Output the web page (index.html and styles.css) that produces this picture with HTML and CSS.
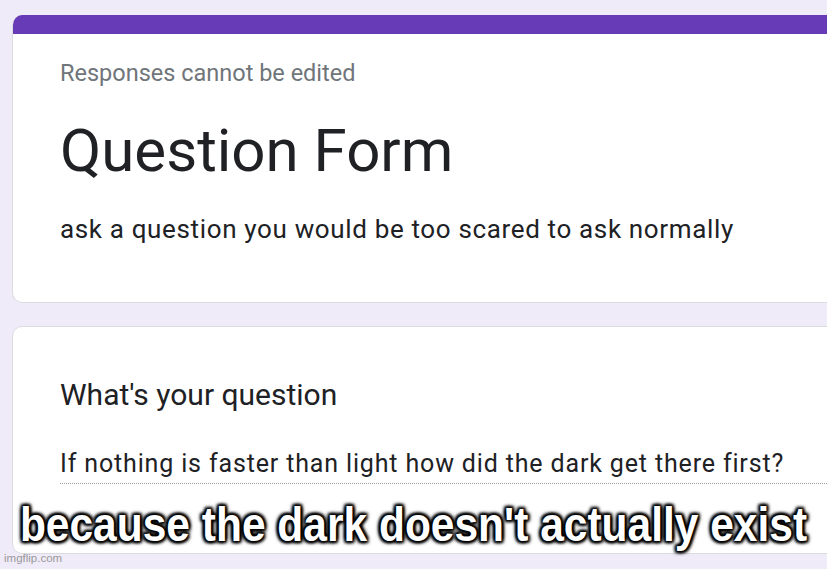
FILE: index.html
```html
<!DOCTYPE html>
<html lang="en">
<head>
    <meta charset="UTF-8">
    <meta name="viewport" content="width=device-width, initial-scale=1.0">
    <title>Question Form</title>
    <link rel="stylesheet" href="styles.css">
</head>
<body>
    <div class="page">
        <!-- header card -->
        <div class="card card-head">
            <div class="card-band"></div>
            <div class="card-body">
                <p class="note">Responses cannot be edited</p>
                <h1 class="title">Question Form</h1>
                <p class="desc">ask a question you would be too scared to ask normally</p>
            </div>
        </div>
        <!-- question card -->
        <div class="card card-question">
            <div class="card-body">
                <h2 class="question">What's your question</h2>
                <div class="answer">If nothing is faster than light how did the dark get there first?</div>
            </div>
        </div>
    </div>
    <div class="caption">because the dark doesn't actually exist</div>
    <div class="watermark">imgflip.com</div>
</body>
</html>
```

FILE: styles.css
```css
*{
    box-sizing: border-box;
}
body{
    margin: 0px;
    height: 569px;
    overflow: hidden;
    position: relative;
    background-color: #f0ebf8;
    font-family: Roboto, "Noto Sans", sans-serif;
    line-height: 1.2;
    color: #202124;
}
.page{
    padding: 15px 0 0 12px;
    display: flex;
    flex-direction: column;
    gap: 23px;
    width: 960px;
}
.card{
    background-color: #fff;
    border: 1px solid #dadce0;
    border-radius: 10px;
    overflow: hidden;
}
.card-head{
    height: 288px;
    border-top: none;
}
.card-band{
    height: 19px;
    background-color: #673ab7;
}
.card-body{
    padding: 0 0 0 47px;
}
.note{
    margin: 25px 0 0 0;
    font-size: 23.5px;
    color: #70757a;
}
.title{
    margin: 28px 0 0 0;
    font-size: 60px;
    font-weight: 400;
    line-height: 1.2;
}
.desc{
    margin: 27px 0 0 0;
    font-size: 26px;
    letter-spacing: 0.65px;
}
.card-question{
    height: 228px;
}
.card-question .card-body{
    padding-top: 50px;
}
.question{
    margin: 0;
    font-size: 30px;
    font-weight: 400;
    line-height: 1.2;
}
.answer{
    margin-top: 36px;
    font-size: 25px;
    letter-spacing: 0.85px;
    padding-bottom: 4px;
    border-bottom: 1px dotted #9aa0a6;
}
.caption{
    position: absolute;
    left: 0;
    right: 0;
    top: 506px;
    text-align: center;
    font-family: "Liberation Sans", Arial, sans-serif;
    font-weight: 700;
    font-size: 42.5px;
    line-height: 1;
    color: #fff;
    transform: scaleY(1.15);
    transform-origin: 0 36px;
    text-shadow: 0 0 3px #000, 0 0 3px #000, 0 0 3px #000, 2px 2px 3px #000, -2px -2px 3px #000, 2px -2px 3px #000, -2px 2px 3px #000;
}
.watermark{
    position: absolute;
    left: 4px;
    bottom: 3px;
    font-family: "Liberation Sans", Arial, sans-serif;
    font-size: 11.5px;
    color: #999;
}
```
